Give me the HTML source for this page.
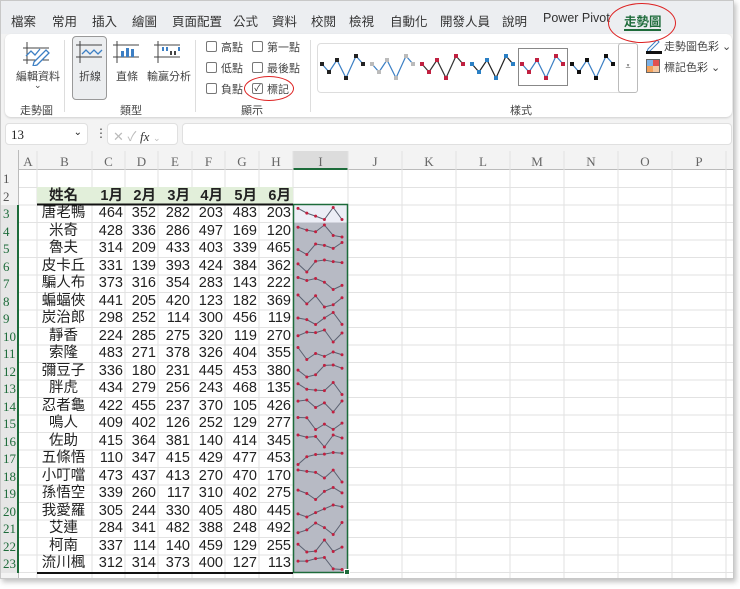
<!DOCTYPE html>
<html><head><meta charset="utf-8">
<style>
*{margin:0;padding:0;box-sizing:border-box}
body{width:740px;height:589px;background:#fff;position:relative;overflow:hidden;font-family:"Liberation Sans","Noto Sans CJK TC",sans-serif;color:#222}
.a{position:absolute;white-space:nowrap}
#win{position:absolute;left:0;top:0;width:734px;height:579px;background:#f3f3f3;border:1px solid #c8c8c8;box-shadow:2px 3px 5px rgba(0,0,0,.25)}
.tab{position:absolute;top:11px;font-size:12.5px;color:#333}
.lbl{font-size:11px;color:#444}
.cb{position:absolute;width:11px;height:11px;border:1px solid #777;border-radius:2px;background:#fff}
.sep{position:absolute;top:40px;width:1px;height:72px;background:#ddd}
.colh{position:absolute;top:153px;height:17px;font-family:"Liberation Serif",serif;font-size:13px;color:#666;text-align:center;line-height:17px}
.rowh{position:absolute;left:3px;font-family:"Liberation Serif",serif;font-size:13px;color:#555;line-height:17.5px}
.c{position:absolute;font-size:14.5px;line-height:17.5px;text-align:right;color:#222}
</style></head><body>
<div id="win"></div>
<div class="a" style="left:1px;top:1px;width:732px;height:33px;background:#eceef1"></div>
<div class="tab" style="left:11px">檔案</div>
<div class="tab" style="left:52px">常用</div>
<div class="tab" style="left:92px">插入</div>
<div class="tab" style="left:132px">繪圖</div>
<div class="tab" style="left:172px">頁面配置</div>
<div class="tab" style="left:233px">公式</div>
<div class="tab" style="left:272px">資料</div>
<div class="tab" style="left:311px">校閱</div>
<div class="tab" style="left:349px">檢視</div>
<div class="tab" style="left:390px">自動化</div>
<div class="tab" style="left:440px">開發人員</div>
<div class="tab" style="left:502px">說明</div>
<div class="tab" style="left:543px">Power Pivot</div>
<div class="tab" style="left:624px;color:#1d6b3a;font-weight:bold">走勢圖</div>
<div class="a" style="left:624px;top:29px;width:37px;height:2px;background:#1d6b3a"></div>
<!-- ribbon -->
<div class="a" style="left:5px;top:34px;width:727px;height:83px;background:#fff;border-radius:6px;box-shadow:0 1px 2px rgba(0,0,0,.15)"></div>
<svg class="a" style="left:22px;top:40px" width="30" height="26"><path d="M5 2v22M1 8h26M1 20h26" stroke="#444" fill="none"/><path d="M4 16l5-5 4 4 5-6" stroke="#3c7fc4" fill="none" stroke-width="1.3"/><path d="M12 22l12-12 3 3-12 12-4 1z" stroke="#3c7fc4" fill="#fff" stroke-width="1.3"/></svg>
<div class="a lbl" style="left:16px;top:68px">編輯資料</div>
<div class="a lbl" style="left:34px;top:80px;font-size:9px">⌄</div>
<div class="a lbl" style="left:20px;top:102px">走勢圖</div>
<div class="sep" style="left:64px"></div>
<div class="a" style="left:72px;top:36px;width:35px;height:64px;background:#eceef0;border:1px solid #999;border-radius:4px"></div>
<svg class="a" style="left:76px;top:40px" width="28" height="24"><path d="M4 1v22M0 5h26M0 17h26" stroke="#444" fill="none"/><path d="M6 14l4-4 4 4 4-4 4 4 4-4" stroke="#3c7fc4" fill="none" stroke-width="1.3"/></svg>
<div class="a lbl" style="left:79px;top:68px">折線</div>
<svg class="a" style="left:113px;top:40px" width="28" height="24"><path d="M4 1v22M0 5h26M0 17h26" stroke="#444" fill="none"/><rect x="8" y="11" width="3" height="6" fill="#3c7fc4"/><rect x="13" y="8" width="3" height="9" fill="#3c7fc4"/><rect x="18" y="9" width="3" height="8" fill="#3c7fc4"/></svg>
<div class="a lbl" style="left:116px;top:68px">直條</div>
<svg class="a" style="left:154px;top:40px" width="28" height="24"><path d="M4 1v22M0 5h26M0 17h26" stroke="#444" fill="none"/><rect x="8" y="7" width="2" height="4" fill="#3c7fc4"/><rect x="12" y="7" width="2" height="4" fill="#3c7fc4"/><rect x="16" y="11" width="2" height="4" fill="#444"/><rect x="20" y="11" width="2" height="4" fill="#444"/><rect x="24" y="7" width="2" height="4" fill="#3c7fc4"/></svg>
<div class="a lbl" style="left:147px;top:68px">輸贏分析</div>
<div class="a lbl" style="left:120px;top:102px">類型</div>
<div class="sep" style="left:195px"></div>
<div class="cb" style="left:206px;top:41px"></div><div class="a lbl" style="left:221px;top:39px">高點</div>
<div class="cb" style="left:206px;top:62px"></div><div class="a lbl" style="left:221px;top:60px">低點</div>
<div class="cb" style="left:206px;top:83px"></div><div class="a lbl" style="left:221px;top:81px">負點</div>
<div class="cb" style="left:252px;top:41px"></div><div class="a lbl" style="left:267px;top:39px">第一點</div>
<div class="cb" style="left:252px;top:62px"></div><div class="a lbl" style="left:267px;top:60px">最後點</div>
<div class="cb" style="left:252px;top:83px;font-size:9px;line-height:9px;text-align:center">✓</div><div class="a lbl" style="left:267px;top:81px">標記</div>
<div class="a" style="left:244px;top:76px;width:50px;height:25px;border:1.5px solid #d22;border-radius:50%"></div>
<div class="a lbl" style="left:241px;top:102px">顯示</div>
<div class="sep" style="left:310px"></div>
<div class="a" style="left:317px;top:43px;width:320px;height:50px;border:1px solid #ddd;border-radius:4px"></div>
<div class="a" style="left:518px;top:48px;width:50px;height:38px;border:1px solid #888"></div>
<div class="a" style="left:618px;top:43px;width:20px;height:50px;border:1px solid #bbb;border-radius:3px;background:#fff;font-size:9px;text-align:center;line-height:44px;color:#444">⩡</div>
<svg class="a" style="left:318px;top:48px" width="300" height="40" id="gal"></svg>
<div class="a lbl" style="left:510px;top:102px">樣式</div>
<svg class="a" style="left:646px;top:38px" width="16" height="16"><path d="M2 11l9-9 2 2-9 9-3 1z" stroke="#3c7fc4" fill="none"/><rect x="0" y="13" width="16" height="3" fill="#111"/></svg>
<div class="a lbl" style="left:664px;top:38px">走勢圖色彩 ⌄</div>
<svg class="a" style="left:646px;top:59px" width="14" height="14"><rect x="0" y="0" width="7" height="7" fill="#7cb1e6"/><rect x="7" y="0" width="7" height="7" fill="#e05050"/><rect x="0" y="7" width="7" height="7" fill="#f2a05a"/><rect x="7" y="7" width="7" height="7" fill="#f3c6a0"/><rect x=".5" y=".5" width="13" height="13" fill="none" stroke="#666"/></svg>
<div class="a lbl" style="left:664px;top:59px">標記色彩 ⌄</div>
<div class="a" style="left:608px;top:3px;width:68px;height:40px;border:1.5px solid #d22;border-radius:50%"></div>
<!-- formula bar -->
<div class="a" style="left:5px;top:123px;width:83px;height:22px;background:#fff;border-radius:4px;border:1px solid #e0e0e0;font-family:'Liberation Serif',serif;font-size:13px;padding:3px 5px">13<span style="position:absolute;right:5px;top:3px;font-size:10px">⌄</span></div>
<div class="a" style="left:95px;top:126px;font-size:12px;color:#444">⋮</div>
<div class="a" style="left:107px;top:123px;width:71px;height:22px;background:#fff;border-radius:4px;border:1px solid #e0e0e0;font-size:13px;color:#bbb;padding:2px 5px">✕ ✓ <i style="color:#333;font-family:'Liberation Serif',serif">fx</i> <span style="font-size:9px">⌄</span></div>
<div class="a" style="left:182px;top:123px;width:550px;height:22px;background:#fff;border:1px solid #e0e0e0;border-radius:4px"></div>
<!-- grid -->
<div class="a" style="left:1px;top:150px;width:732px;height:428px;background:#fff"></div>
<div class="a" style="left:1px;top:150px;width:732px;height:20px;background:#f3f3f3;border-bottom:1px solid #bbb"></div>
<div class="a" style="left:1px;top:150px;width:18px;height:428px;background:#f3f3f3;border-right:1px solid #bbb"></div>
<div class="a" style="left:293px;top:151px;width:55px;height:19px;background:#dcdcdc;border-bottom:2px solid #1d6b3a"></div>
<div class="a" style="left:1px;top:205px;width:18px;height:368px;background:#e6e6e6;border-right:2px solid #1d6b3a"></div>
<svg class="a" style="left:0;top:0" width="740" height="578" id="grid"></svg>
<div class="a" style="left:37px;top:187px;width:256px;height:17px;background:#e2efda"></div>
<div class="colh" style="left:19px;width:18px">A</div><div class="colh" style="left:37px;width:55px">B</div><div class="colh" style="left:92px;width:33px">C</div><div class="colh" style="left:125px;width:33px">D</div><div class="colh" style="left:158px;width:34px">E</div><div class="colh" style="left:192px;width:33px">F</div><div class="colh" style="left:225px;width:34px">G</div><div class="colh" style="left:259px;width:34px">H</div><div class="colh" style="left:293px;width:55px">I</div><div class="colh" style="left:348px;width:54px">J</div><div class="colh" style="left:402px;width:54px">K</div><div class="colh" style="left:456px;width:54px">L</div><div class="colh" style="left:510px;width:54px">M</div><div class="colh" style="left:564px;width:54px">N</div><div class="colh" style="left:618px;width:54px">O</div><div class="colh" style="left:672px;width:54px">P</div>
<div id="rh"></div>
<div id="data"></div>
<svg class="a" style="left:0;top:0" width="740" height="589" id="spk"></svg>
<script>
(function(){
var rows=[["姓名","1月","2月","3月","4月","5月","6月"],
["唐老鴨",464,352,282,203,483,203],["米奇",428,336,286,497,169,120],["魯夫",314,209,433,403,339,465],["皮卡丘",331,139,393,424,384,362],["騙人布",373,316,354,283,143,222],["蝙蝠俠",441,205,420,123,182,369],["炭治郎",298,252,114,300,456,119],["靜香",224,285,275,320,119,270],["索隆",483,271,378,326,404,355],["彌豆子",336,180,231,445,453,380],["胖虎",434,279,256,243,468,135],["忍者龜",422,455,237,370,105,426],["鳴人",409,402,126,252,129,277],["佐助",415,364,381,140,414,345],["五條悟",110,347,415,429,477,453],["小叮噹",473,437,413,270,470,170],["孫悟空",339,260,117,310,402,275],["我愛羅",305,244,330,405,480,445],["艾連",284,341,482,388,248,492],["柯南",337,114,140,459,129,255],["流川楓",312,314,373,400,127,113]];
var colL=[19,37,92,125,158,192,225,259,293,348,402,456,510,564,618,672,726];
var RH=17.5,T=170;
var g='';
for(var i=1;i<colL.length;i++)g+='<line x1="'+colL[i]+'" y1="151" x2="'+colL[i]+'" y2="578" stroke="#e2e2e2"/>';
for(var r=1;r<=24;r++){var y=T+RH*r;g+='<line x1="19" y1="'+y+'" x2="733" y2="'+y+'" stroke="#e2e2e2"/>';}
document.getElementById('grid').innerHTML=g;
var h='';for(var r=1;r<=23;r++)h+='<div class="rowh" style="top:'+(T+RH*(r-1))+'px;color:'+(r>=3&&r<=23?'#1d6b3a':'#555')+'">'+r+'</div>';
document.getElementById('rh').innerHTML=h;
var d='';var w=[55,33,33,34,33,34,34];
rows.forEach(function(row,k){var tp=T+RH*(k+1);row.forEach(function(v,j){var bold=k==0?'font-weight:bold;':'';var st='left:'+colL[j+1]+'px;width:'+(w[j]-2)+'px;top:'+tp+'px;'+bold;if(j==0)st+='text-align:center;';d+='<div class="c" style="'+st+'">'+v+'</div>';});});
document.getElementById('data').innerHTML=d;
var s='<rect x="293.5" y="205" width="54" height="367.5" fill="#b7bac4"/><rect x="294" y="205" width="53" height="17.5" fill="#eceef6"/>';
for(var k=1;k<rows.length;k++){var v=rows[k].slice(1),mn=Math.min.apply(null,v),mx=Math.max.apply(null,v),tp=T+RH*(k+1);var pts=v.map(function(x,i){return [298+i*8.8,tp+14.5-(x-mn)/(mx-mn)*12];});s+='<polyline points="'+pts.map(function(p){return p.join(',')}).join(' ')+'" fill="none" stroke="#5a6070" stroke-width="1"/>';pts.forEach(function(p){s+='<circle cx="'+p[0]+'" cy="'+p[1]+'" r="1.5" fill="#c02040"/>';});}
s+='<rect x="293.5" y="204.5" width="54" height="368" fill="none" stroke="#1d6b3a" stroke-width="1.5"/><rect x="344.5" y="569.5" width="5" height="5" fill="#1d6b3a" stroke="#fff"/>';
s+='<line x1="37" y1="204.5" x2="293" y2="204.5" stroke="#111" stroke-width="2"/><line x1="37" y1="573" x2="293" y2="573" stroke="#111" stroke-width="2"/>';
document.getElementById('spk').innerHTML=s;
var gs='',cols=[['#3c7fc4','#222'],['#3c7fc4','#bbb'],['#333','#c02040'],['#222','#2a7fc4'],['#3c7fc4','#c02040'],['#3c7fc4','#111']];
for(var i=0;i<6;i++){var x0=4+i*50;var p=[[0,14],[7,22],[15,10],[24,28],[34,6],[41,14]].map(function(q){return [x0+q[0],q[1]+2]});gs+='<polyline points="'+p.map(function(q){return q.join(',')}).join(' ')+'" fill="none" stroke="'+cols[i][0]+'" stroke-width="1.2"/>';p.forEach(function(q){gs+='<rect x="'+(q[0]-2)+'" y="'+(q[1]-2)+'" width="4" height="4" fill="'+cols[i][1]+'"/>';});}
document.getElementById('gal').innerHTML=gs;
})();
</script>
</body></html>
